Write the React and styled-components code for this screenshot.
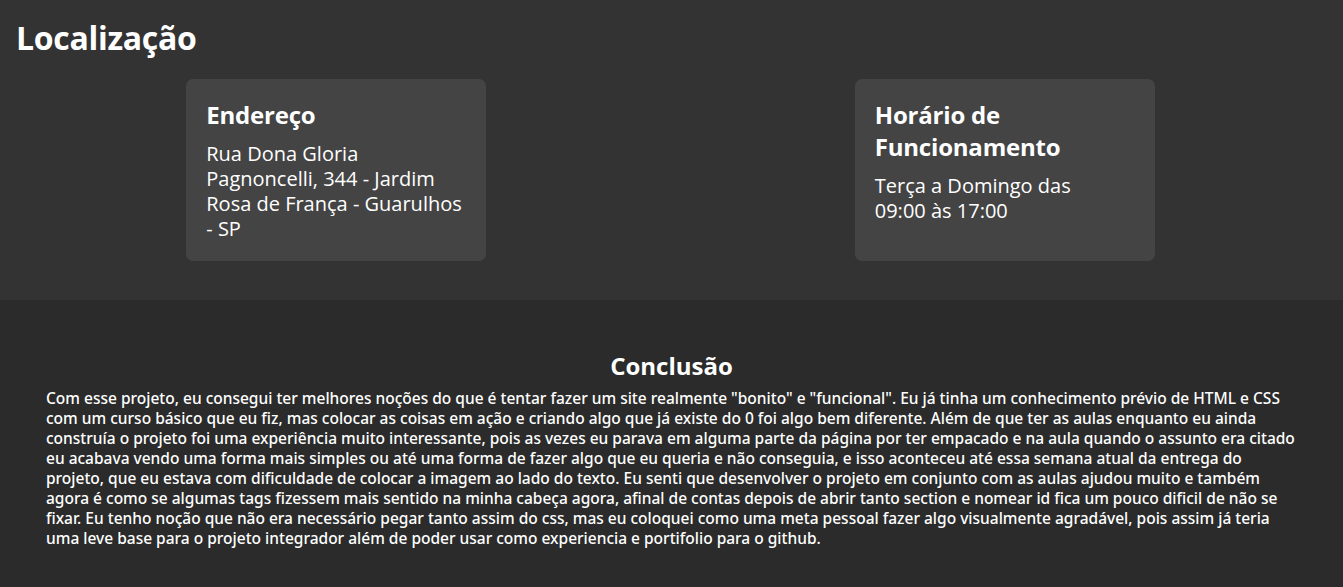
import React from 'react'
import styled, { createGlobalStyle } from 'styled-components'

const GlobalStyle = createGlobalStyle`
  * { box-sizing: border-box; }
  body {
    margin: 0;
    background: #2b2b2b;
    color: #ffffff;
    font-family: "Open Sans", "Noto Sans", sans-serif;
  }
`

function App() {
  return (
    <>
      <GlobalStyle />
      <Location>
        <Title>Localização</Title>
        <CardRow>
          <Card>
            <CardTitle>Endereço</CardTitle>
            <CardText>
              Rua Dona Gloria Pagnoncelli, 344 - Jardim Rosa de França - Guarulhos - SP
            </CardText>
          </Card>
          <Card>
            <CardTitle>Horário de Funcionamento</CardTitle>
            <CardText>
              Terça a Domingo das
              <br />
              09:00 às 17:00
            </CardText>
          </Card>
        </CardRow>
      </Location>
      <Conclusion>
        <ConclusionTitle>Conclusão</ConclusionTitle>
        <ConclusionText>
          Com esse projeto, eu consegui ter melhores noções do que é tentar fazer um site realmente "bonito" e "funcional". Eu já tinha um conhecimento prévio de HTML e CSS com um curso básico que eu fiz, mas colocar as coisas em ação e criando algo que já existe do 0 foi algo bem diferente. Além de que ter as aulas enquanto eu ainda construía o projeto foi uma experiência muito interessante, pois as vezes eu parava em alguma parte da página por ter empacado e na aula quando o assunto era citado eu acabava vendo uma forma mais simples ou até uma forma de fazer algo que eu queria e não conseguia, e isso aconteceu até essa semana atual da entrega do projeto, que eu estava com dificuldade de colocar a imagem ao lado do texto. Eu senti que desenvolver o projeto em conjunto com as aulas ajudou muito e também agora é como se algumas tags fizessem mais sentido na minha cabeça agora, afinal de contas depois de abrir tanto section e nomear id fica um pouco dificil de não se fixar. Eu tenho noção que não era necessário pegar tanto assim do css, mas eu coloquei como uma meta pessoal fazer algo visualmente agradável, pois assim já teria uma leve base para o projeto integrador além de poder usar como experiencia e portifolio para o github.
        </ConclusionText>
      </Conclusion>
    </>
  )
}

export default App

const Location = styled.section`
  background: #333333;
  padding: 18px 4px 39px 2px;
`

const Title = styled.h1`
  margin: 0 0 21px 14px;
  font-size: 32px;
  line-height: 40px;
  font-weight: 700;
  letter-spacing: -0.3px;
`

const CardRow = styled.div`
  display: flex;
  justify-content: space-around;
`

const Card = styled.div`
  width: 300px;
  padding: 20px;
  background: #444444;
  border-radius: 7px;
`

const CardTitle = styled.h2`
  margin: 0 0 10px;
  font-size: 24px;
  line-height: 32px;
  font-weight: 700;
  letter-spacing: -0.2px;
`

const CardText = styled.p`
  margin: 0;
  font-size: 20px;
  line-height: 25px;
`

const Conclusion = styled.section`
  padding: 50px 46px 40px;
  background: #2b2b2b;
`

const ConclusionTitle = styled.h2`
  margin: 0 0 6px;
  text-align: center;
  font-size: 24px;
  line-height: 32px;
  font-weight: 700;
`

const ConclusionText = styled.p`
  margin: 0;
  font-family: "Noto Sans", sans-serif;
  font-size: 15.5px;
  line-height: 20px;
  font-weight: 500;
`
